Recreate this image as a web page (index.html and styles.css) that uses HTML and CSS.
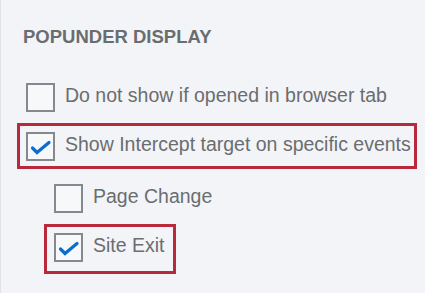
FILE: index.html
```html
<!DOCTYPE html>
<html lang="en">
<head>
<meta charset="utf-8">
<title>Popunder Display</title>
<link rel="stylesheet" href="styles.css">
</head>
<body>
<div class="panel">
  <h2 class="heading">POPUNDER DISPLAY</h2>
  <div class="option row-first">
    <span class="checkbox"></span>
    <span class="label">Do not show if opened in browser tab</span>
  </div>
  <div class="option highlight highlight-main">
    <span class="checkbox checked">
      <svg viewBox="0 0 29 29" width="29" height="29"><path d="M6.5 16 L11 20.5 L23 10.5" fill="none" stroke="#0a6ed1" stroke-width="3.2" stroke-linecap="round" stroke-linejoin="miter"/></svg>
    </span>
    <span class="label">Show Intercept target on specific events</span>
  </div>
  <div class="option nested row-page">
    <span class="checkbox"></span>
    <span class="label">Page Change</span>
  </div>
  <div class="option highlight highlight-exit">
    <span class="checkbox checked">
      <svg viewBox="0 0 29 29" width="29" height="29"><path d="M6.5 16 L11 20.5 L23 10.5" fill="none" stroke="#0a6ed1" stroke-width="3.2" stroke-linecap="round" stroke-linejoin="miter"/></svg>
    </span>
    <span class="label">Site Exit</span>
  </div>
</div>
</body>
</html>
```

FILE: styles.css
```css
html, body {
  margin: 0;
  padding: 0;
  background: #f3f4f7;
}

.panel {
  box-sizing: border-box;
  height: 293px;
  border-left: 1px solid #e1e3e7;
  padding-top: 26px;
  font-family: "Liberation Sans", Arial, sans-serif;
  color: #6a6d70;
}

.heading {
  margin: 0 0 0 22px;
  font-size: 18.5px;
  line-height: 22px;
  font-weight: bold;
  color: #6a6d70;
}

.option {
  display: flex;
  align-items: flex-start;
  gap: 10px;
}

.checkbox {
  box-sizing: border-box;
  flex: none;
  width: 29px;
  height: 29px;
  border: 2px solid #85888c;
  background: #f7f8fa;
  position: relative;
}

.checkbox svg {
  position: absolute;
  left: -2px;
  top: -2px;
}

.label {
  font-size: 19.5px;
  line-height: 24px;
  white-space: nowrap;
}

.row-first {
  margin: 35px 0 0 25px;
}

.highlight {
  box-sizing: border-box;
  border: 3px solid #b8293c;
}

.highlight-main {
  width: 400px;
  margin: 11px 0 0 16px;
  padding: 6px 0 5px 6px;
}

.row-page {
  margin: 15px 0 0 53px;
}

.highlight-exit {
  width: 132px;
  margin: 11px 0 0 43px;
  padding: 6px 0 9px 7px;
}
```
